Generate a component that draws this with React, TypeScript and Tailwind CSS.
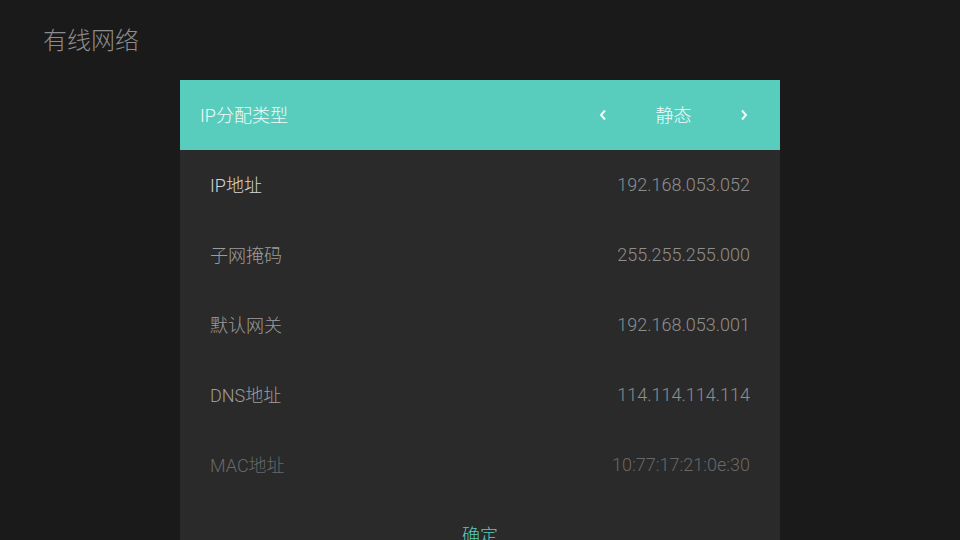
const ROWS = [
  { label: "IP地址", value: "192.168.053.052", labelCls: "text-[#d6d6d6]", valueCls: "text-[#8e8e8e]" },
  { label: "子网掩码", value: "255.255.255.000", labelCls: "text-[#9c9c9c]", valueCls: "text-[#8e8e8e]" },
  { label: "默认网关", value: "192.168.053.001", labelCls: "text-[#9c9c9c]", valueCls: "text-[#8e8e8e]" },
  { label: "DNS地址", value: "114.114.114.114", labelCls: "text-[#9c9c9c]", valueCls: "text-[#8e8e8e]" },
  { label: "MAC地址", value: "10:77:17:21:0e:30", labelCls: "text-[#686868]", valueCls: "text-[#686868]" },
];

function Chevron({ dir }: { dir: "left" | "right" }) {
  return (
    <svg width="8" height="12" viewBox="0 0 8 12" className="shrink-0">
      <path
        d={dir === "left" ? "M6 1.5 L2 6 L6 10.5" : "M2 1.5 L6 6 L2 10.5"}
        fill="none"
        stroke="#f2fbf9"
        strokeWidth="2"
      />
    </svg>
  );
}

export default function App() {
  return (
    <div
      className="h-[540px] w-[960px] overflow-hidden bg-[#1a1a1a]"
      style={{ fontFamily: 'Roboto, "Noto Sans CJK SC", sans-serif' }}
    >
      {/* Title */}
      <div className="flex h-[80px] items-start pl-[43px] pt-[25px]">
        <h1 className="text-[24px] font-light leading-[32px] text-[#8c8c8c]">有线网络</h1>
      </div>

      {/* Dialog */}
      <div className="mx-auto w-[600px] bg-[#2a2a2a]">
        <div className="flex h-[70px] items-center bg-[#58cdbd] pl-[20px] pr-[32px] text-[#f2fbf9]">
          <span className="flex-1 text-[18px] font-light">IP分配类型</span>
          <div className="flex items-center">
            <Chevron dir="left" />
            <span className="w-[133px] text-center text-[18px] font-light">静态</span>
            <Chevron dir="right" />
          </div>
        </div>

        {ROWS.map((row) => (
          <div key={row.label} className="flex h-[70px] items-center justify-between px-[30px]">
            <span className={`text-[18px] font-light ${row.labelCls}`}>{row.label}</span>
            <span className={`-mt-[2px] text-[18px] font-light ${row.valueCls}`}>{row.value}</span>
          </div>
        ))}

        <div className="flex h-[70px] items-center justify-center">
          <span className="text-[18px] font-light text-[#58cdbd]">确定</span>
        </div>
      </div>
    </div>
  );
}
